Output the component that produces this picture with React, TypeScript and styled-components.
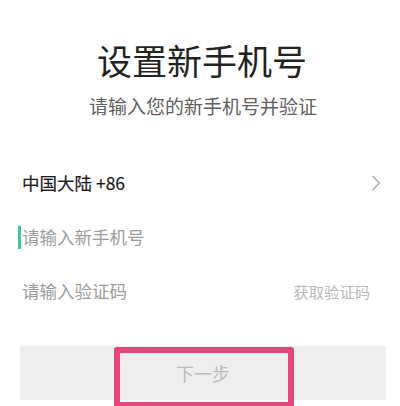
import React from 'react';
import styled, { createGlobalStyle } from 'styled-components';

const GlobalStyle = createGlobalStyle`
  html, body {
    margin: 0;
    padding: 0;
    background: #ffffff;
    font-family: 'Noto Sans CJK SC', 'Noto Sans', sans-serif;
  }
  * {
    box-sizing: border-box;
  }
`;

const Page = styled.div`
  width: 400px;
  height: 406px;
  overflow: hidden;
  background: #ffffff;
  display: flex;
  flex-direction: column;
  padding-top: 42px;
`;

const Title = styled.h1`
  margin: 0;
  font-size: 35px;
  line-height: 35px;
  font-weight: 400;
  color: #222222;
  text-align: center;
  padding-left: 4px;
`;

const Subtitle = styled.p`
  margin: 19px 0 0;
  font-size: 19px;
  line-height: 19px;
  color: #5f5f5f;
  text-align: center;
  padding-left: 6px;
`;

const Form = styled.div`
  margin-top: 41px;
  display: flex;
  flex-direction: column;
  padding: 0 19px 0 22px;
`;

const Row = styled.div`
  height: 54px;
  display: flex;
  align-items: center;
  justify-content: space-between;
`;

const Country = styled.span`
  font-size: 17.5px;
  line-height: 18px;
  font-weight: 400;
  color: #1a1a1a;
  -webkit-text-stroke: 0.2px #1a1a1a;
`;

const Caret = styled.span`
  width: 3px;
  height: 23px;
  margin-left: -4px;
  margin-right: 1px;
  background: #3cc6a6;
  flex-shrink: 0;
`;

const Field = styled.input`
  flex: 1;
  min-width: 0;
  border: none;
  outline: none;
  padding: 0;
  background: transparent;
  font-family: inherit;
  font-size: 17.5px;
  line-height: 20px;
  color: #222222;

  &::placeholder {
    color: #9c9c9c;
  }
`;

const CodeLink = styled.span`
  font-size: 15.3px;
  line-height: 16px;
  color: #b8b8b8;
  margin-right: 11px;
`;

const ButtonWrap = styled.div`
  position: relative;
  margin: 28px 14px 0 20px;
`;

const NextButton = styled.button`
  width: 100%;
  height: 54px;
  border: none;
  border-radius: 2px;
  background: #eeeeee;
  color: #bbbbbb;
  font-family: inherit;
  font-size: 18px;
  display: flex;
  align-items: center;
  justify-content: center;
`;

const Highlight = styled.div`
  position: absolute;
  left: 94px;
  top: 1px;
  width: 180px;
  height: 61px;
  border: 6px solid #e6457b;
  border-radius: 3px;
  pointer-events: none;
`;

const Chevron = () => (
  <svg width="10" height="16" viewBox="0 0 10 16" fill="none">
    <polyline points="1.5,1 8.5,8 1.5,15" stroke="#aaaaaa" strokeWidth="1.4" />
  </svg>
);

export default function App() {
  return (
    <>
      <GlobalStyle />
      <Page>
        <Title>设置新手机号</Title>
        <Subtitle>请输入您的新手机号并验证</Subtitle>
        <Form>
          <Row>
            <Country>中国大陆 +86</Country>
            <Chevron />
          </Row>
          <Row>
            <Caret />
            <Field placeholder="请输入新手机号" />
          </Row>
          <Row>
            <Field placeholder="请输入验证码" />
            <CodeLink>获取验证码</CodeLink>
          </Row>
        </Form>
        <ButtonWrap>
          <NextButton>下一步</NextButton>
          <Highlight />
        </ButtonWrap>
      </Page>
    </>
  );
}
